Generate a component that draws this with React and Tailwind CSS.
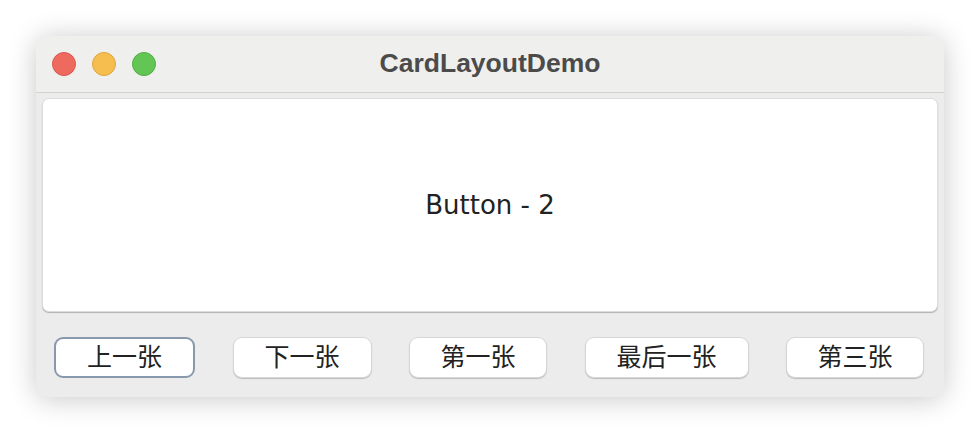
import React from "react";

const buttons = [
  { label: "上一张", w: "w-[141px]", focused: true },
  { label: "下一张", w: "w-[139px]" },
  { label: "第一张", w: "w-[138px]" },
  { label: "最后一张", w: "w-[164px]" },
  { label: "第三张", w: "w-[138px]" },
];

const cjk = { fontFamily: '"DejaVu Sans", "Noto Sans CJK SC", sans-serif' };

export default function App() {
  return (
    <div className="w-[980px] h-[434px] bg-white overflow-hidden pt-[36px] pl-[36px]">
      <div className="w-[908px] h-[361px] rounded-[12px] bg-[#ececec] shadow-[0_2px_28px_rgba(0,0,0,0.22)] flex flex-col overflow-hidden">
        {/* title bar */}
        <div className="relative h-[57px] shrink-0 bg-[#efefed] border-b border-[#d3d3d1] flex items-center justify-center">
          <div className="absolute left-[16px] top-[16px] flex gap-[16px]">
            <span className="w-[24px] h-[24px] rounded-full bg-[#ee6a5f] border border-[#d9574c]" />
            <span className="w-[24px] h-[24px] rounded-full bg-[#f5be4f] border border-[#dea63b]" />
            <span className="w-[24px] h-[24px] rounded-full bg-[#62c554] border border-[#52ad45]" />
          </div>
          <span
            className="text-[26.5px] font-bold text-[#4b4b4b]"
            style={{ fontFamily: '"Liberation Sans", Arial, sans-serif' }}
          >
            CardLayoutDemo
          </span>
        </div>

        {/* card area */}
        <div className="px-[6px] pt-[5px]">
          <div className="h-[214px] rounded-[7px] bg-white border border-[#dcdcdc] shadow-[0_1px_1px_rgba(0,0,0,0.25)] flex items-center justify-center">
            <span className="text-[26px] text-[#222]" style={cjk}>
              Button - 2
            </span>
          </div>
        </div>

        {/* buttons */}
        <div className="mt-[25px] flex gap-[37.5px] pl-[18px]">
          {buttons.map((b) => (
            <button
              key={b.label}
              className={`${b.w} h-[41px] rounded-[9px] bg-white flex items-center justify-center text-[25px] text-[#222] ${
                b.focused
                  ? "border-2 border-[#8899ae]"
                  : "border border-[#d6d6d6] shadow-[0_1px_1px_rgba(0,0,0,0.2)]"
              }`}
              style={cjk}
            >
              {b.label}
            </button>
          ))}
        </div>
      </div>
    </div>
  );
}
